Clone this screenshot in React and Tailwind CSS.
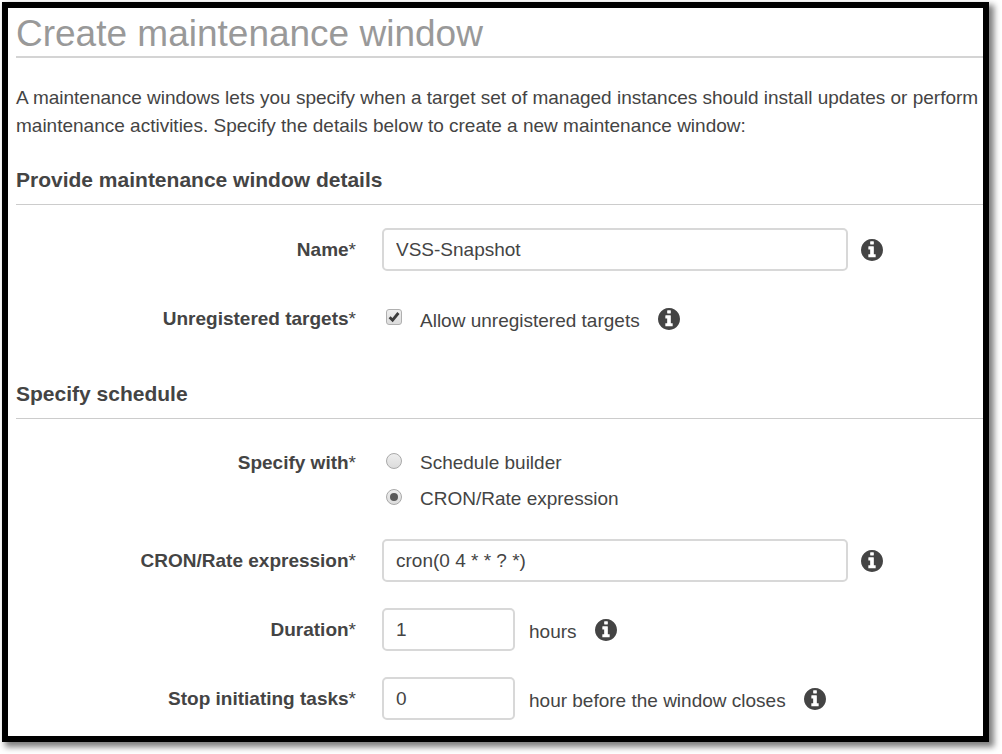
import React, { useState } from "react";

const inputClass =
  "h-[43px] min-w-0 rounded-[5px] border-2 border-[#d8d8d8] bg-white px-3 text-[19px] outline-none focus:border-[#66afe9]";

const SectionTitle = ({ children }) => (
  <h2 className="border-b border-[#cccccc] pb-[10px] text-[21px] leading-7 font-bold">
    {children}
  </h2>
);

const InfoButton = ({ label }) => (
  <button type="button" aria-label={label} className="shrink-0 cursor-pointer">
    <svg viewBox="0 128 1536 1536" className="size-[22px]" fill="currentColor">
      <path d="M1024 1376v-160q0-14-9-23t-23-9h-96v-512q0-14-9-23t-23-9h-320q-14 0-23 9t-9 23v160q0 14 9 23t23 9h96v320h-96q-14 0-23 9t-9 23v160q0 14 9 23t23 9h448q14 0 23-9t9-23zm-128-896v-160q0-14-9-23t-23-9h-192q-14 0-23 9t-9 23v160q0 14 9 23t23 9h192q14 0 23-9t9-23zm640 416q0 209-103 385.500t-279.500 279.500-385.500 103-385.500-103-279.500-279.500-103-385.500 103-385.500 279.500-279.500 385.500-103 385.500 103 279.500 279.500 103 385.500z" />
    </svg>
  </button>
);

const FieldLabel = ({ htmlFor, id, children }) => {
  const Tag = htmlFor ? "label" : "div";
  return (
    <Tag
      htmlFor={htmlFor}
      id={id}
      className="w-[340px] shrink-0 text-right text-[19px] leading-7 font-bold"
    >
      {children}
      <span className="font-normal">*</span>
    </Tag>
  );
};

const Radio = ({ label, value, selected, onChange }) => (
  <label className="flex items-center gap-[18px] text-[19px] leading-7">
    <span className="grid pb-1">
      <input
        type="radio"
        name="specifyWith"
        value={value}
        checked={selected === value}
        onChange={() => onChange(value)}
        className="col-start-1 row-start-1 size-4 appearance-none rounded-full border border-[#a9a9a9] bg-linear-to-b from-[#eeeeee] to-[#dcdcdc]"
      />
      {selected === value && (
        <span className="pointer-events-none col-start-1 row-start-1 size-2 place-self-center rounded-full bg-[#5a5a5a]" />
      )}
    </span>
    {label}
  </label>
);

const App = () => {
  const [name, setName] = useState("VSS-Snapshot");
  const [allowTargets, setAllowTargets] = useState(true);
  const [specifyWith, setSpecifyWith] = useState("cron");
  const [cron, setCron] = useState("cron(0 4 * * ? *)");
  const [duration, setDuration] = useState("1");
  const [stopTasks, setStopTasks] = useState("0");

  return (
    <div className="bg-white pt-[2px] pr-[13px] pb-[13px] pl-[2px] font-['Liberation_Sans',Arial,sans-serif] text-[#444444]">
      <form className="border-6 border-black bg-white pb-4 pl-2 shadow-[4px_4px_6px_1px_rgba(0,0,0,0.5)]">
        {/* heading */}
        <h1 className="border-b-2 border-[#d4d4d4] pt-1 text-[37px] leading-[44px] text-[#999999]">
          Create maintenance window
        </h1>
        <p className="my-[26px] text-[19px] leading-7">
          A maintenance windows lets you specify when a target set of managed
          instances should install updates or perform maintenance activities.
          Specify the details below to create a new maintenance window:
        </p>

        {/* details */}
        <SectionTitle>Provide maintenance window details</SectionTitle>
        <div className="mt-[23px] mb-10 flex flex-col gap-[26px]">
          <div className="flex items-center gap-[26px]">
            <FieldLabel htmlFor="name">Name</FieldLabel>
            <div className="flex min-w-0 flex-1 items-center gap-[13px]">
              <input
                id="name"
                type="text"
                value={name}
                onChange={(e) => setName(e.target.value)}
                className={`${inputClass} w-full max-w-[466px]`}
              />
              <InfoButton label="About the name" />
            </div>
          </div>
          <div className="flex h-[43px] items-center gap-[26px]">
            <FieldLabel id="unregistered">Unregistered targets</FieldLabel>
            <div className="flex items-center gap-[18px] pl-1">
              <label className="flex items-center gap-[18px] text-[19px] leading-7">
                <span className="grid pb-1">
                  <input
                    type="checkbox"
                    checked={allowTargets}
                    onChange={(e) => setAllowTargets(e.target.checked)}
                    className="col-start-1 row-start-1 size-4 appearance-none rounded-[3px] border border-[#b0b0b0] bg-linear-to-b from-[#eeeeee] to-[#dcdcdc]"
                  />
                  {allowTargets && (
                    <svg
                      viewBox="0 0 16 16"
                      className="pointer-events-none col-start-1 row-start-1 size-4"
                      fill="none"
                      stroke="#3c3c3c"
                      strokeWidth="2.8"
                    >
                      <path d="M3.6 8.2l3 3L12.4 4" />
                    </svg>
                  )}
                </span>
                <span className="pt-1">Allow unregistered targets</span>
              </label>
              <InfoButton label="About unregistered targets" />
            </div>
          </div>
        </div>

        {/* schedule */}
        <SectionTitle>Specify schedule</SectionTitle>
        <div className="mt-[30px] flex flex-col gap-[26px]">
          <div className="flex items-start gap-[26px]">
            <FieldLabel id="specify-with">Specify with</FieldLabel>
            <div
              role="radiogroup"
              aria-labelledby="specify-with"
              className="flex flex-col gap-2 pl-1"
            >
              <Radio
                label="Schedule builder"
                value="builder"
                selected={specifyWith}
                onChange={setSpecifyWith}
              />
              <Radio
                label="CRON/Rate expression"
                value="cron"
                selected={specifyWith}
                onChange={setSpecifyWith}
              />
            </div>
          </div>
          <div className="flex items-center gap-[26px]">
            <FieldLabel htmlFor="cron">CRON/Rate expression</FieldLabel>
            <div className="flex min-w-0 flex-1 items-center gap-[13px]">
              <input
                id="cron"
                type="text"
                value={cron}
                onChange={(e) => setCron(e.target.value)}
                className={`${inputClass} w-full max-w-[466px]`}
              />
              <InfoButton label="About the expression" />
            </div>
          </div>
          <div className="flex items-center gap-[26px]">
            <FieldLabel htmlFor="duration">Duration</FieldLabel>
            <div className="flex items-center text-[19px] leading-7">
              <input
                id="duration"
                type="text"
                value={duration}
                onChange={(e) => setDuration(e.target.value)}
                className={`${inputClass} w-[133px]`}
              />
              <span className="pt-1 pr-[18px] pl-[14px]">hours</span>
              <InfoButton label="About the duration" />
            </div>
          </div>
          <div className="flex items-center gap-[26px]">
            <FieldLabel htmlFor="stop">Stop initiating tasks</FieldLabel>
            <div className="flex items-center text-[19px] leading-7">
              <input
                id="stop"
                type="text"
                value={stopTasks}
                onChange={(e) => setStopTasks(e.target.value)}
                className={`${inputClass} w-[133px]`}
              />
              <span className="pt-1 pr-[18px] pl-[14px]">
                hour before the window closes
              </span>
              <InfoButton label="About stopping tasks" />
            </div>
          </div>
        </div>
      </form>
    </div>
  );
};

export default App;
